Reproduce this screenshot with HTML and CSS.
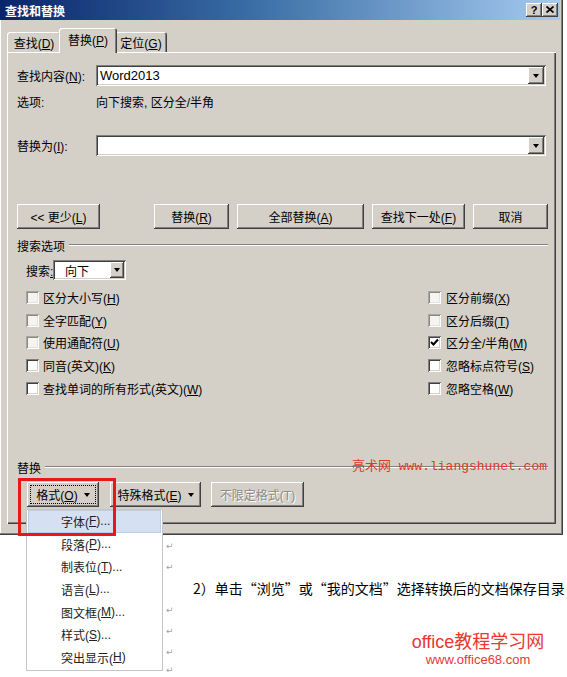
FILE: index.html
```html
<!DOCTYPE html>
<html lang="zh-CN">

<head>
    <meta charset="UTF-8">
    <meta name="viewport" content="width=device-width, initial-scale=1.0">
    <title>查找和替换</title>
    <link rel="stylesheet" href="styles.css">
</head>

<body>
    <div class="page">
        <div class="dialog">
            <div class="titlebar">
                <span class="title">查找和替换</span>
                <div class="cap-btns">
                    <span class="cap-btn">?</span>
                    <span class="cap-btn">
                        <svg width="8" height="7" viewBox="0 0 8 7"><path d="M0.5 0.5 L7.5 6.5 M7.5 0.5 L0.5 6.5" stroke="#000" stroke-width="1.7" fill="none"/></svg>
                    </span>
                </div>
            </div>

            <div class="tabs">
                <span class="tab tab-find"><span>查找(<u>D</u>)</span></span>
                <span class="tab active"><span>替换(<u>P</u>)</span></span>
                <span class="tab tab-goto"><span>定位(<u>G</u>)</span></span>
            </div>

            <div class="panel">
                <div class="field-row">
                    <span class="field-label">查找内容(<u>N</u>):</span>
                    <div class="combo">
                        <span class="combo-text">Word2013</span>
                        <span class="drop-btn"></span>
                    </div>
                </div>
                <div class="opts-row">
                    <span class="field-label">选项:</span>
                    <span>向下搜索, 区分全/半角</span>
                </div>
                <div class="field-row replace-row">
                    <span class="field-label">替换为(<u>I</u>):</span>
                    <div class="combo">
                        <span class="combo-text"></span>
                        <span class="drop-btn"></span>
                    </div>
                </div>

                <div class="btn-row">
                    <span class="btn btn-less"><span>&lt;&lt; 更少(<u>L</u>)</span></span>
                    <div class="btn-group">
                        <span class="btn btn-rep"><span>替换(<u>R</u>)</span></span>
                        <span class="btn btn-all"><span>全部替换(<u>A</u>)</span></span>
                        <span class="btn btn-next"><span>查找下一处(<u>F</u>)</span></span>
                        <span class="btn btn-cancel"><span>取消</span></span>
                    </div>
                </div>

                <div class="group-title"><span>搜索选项</span></div>

                <div class="search-row">
                    <span class="search-label">搜索<u>:</u></span>
                    <div class="select">
                        <span class="select-text">向下</span>
                        <span class="drop-btn small"></span>
                    </div>
                </div>

                <div class="checks">
                    <label class="check"><span class="box dim"></span><span>区分大小写(<u>H</u>)</span></label>
                    <label class="check right"><span class="box dim"></span><span>区分前缀(<u>X</u>)</span></label>
                    <label class="check"><span class="box dim"></span><span>全字匹配(<u>Y</u>)</span></label>
                    <label class="check right"><span class="box dim"></span><span>区分后缀(<u>T</u>)</span></label>
                    <label class="check"><span class="box dim"></span><span>使用通配符(<u>U</u>)</span></label>
                    <label class="check right"><span class="box">
                        <svg width="9" height="9" viewBox="0 0 9 9"><path d="M1 4 L3.5 6.5 L8 1.5" stroke="#000" stroke-width="2" fill="none"/></svg>
                    </span><span>区分全/半角(<u>M</u>)</span></label>
                    <label class="check"><span class="box"></span><span>同音(英文)(<u>K</u>)</span></label>
                    <label class="check right"><span class="box"></span><span>忽略标点符号(<u>S</u>)</span></label>
                    <label class="check"><span class="box"></span><span>查找单词的所有形式(英文)(<u>W</u>)</span></label>
                    <label class="check right"><span class="box"></span><span>忽略空格(<u>W</u>)</span></label>
                </div>

                <div class="bottom">
                    <div class="group-title"><span>替换</span></div>
                    <div class="fmt-row">
                        <span class="btn btn-fmt focus"><span>格式(<u>O</u>)</span><i class="tri"></i></span>
                        <span class="btn btn-special"><span>特殊格式(<u>E</u>)</span><i class="tri"></i></span>
                        <span class="btn btn-nofmt disabled"><span>不限定格式(T)</span></span>
                    </div>
                </div>
            </div>
        </div>

        <div class="doc">
            <div class="line"><span class="pm">↵</span></div>
            <div class="line"><span class="pm">↵</span></div>
            <div class="line"><span class="pm"></span><span class="doc-text">2）单击“浏览”或“我的文档”选择转换后的文档保存目录</span></div>
            <div class="line"><span class="pm">↵</span></div>
            <div class="line"><span class="pm">↵</span></div>
            <div class="line"><span class="pm">↵</span></div>
            <div class="line last"><span class="pm">↵</span></div>
        </div>

        <ul class="menu">
            <li class="hover">字体(<u>F</u>)...</li>
            <li>段落(<u>P</u>)...</li>
            <li>制表位(<u>T</u>)...</li>
            <li>语言(<u>L</u>)...</li>
            <li>图文框(<u>M</u>)...</li>
            <li>样式(<u>S</u>)...</li>
            <li>突出显示(<u>H</u>)</li>
        </ul>

        <div class="annot"></div>

        <div class="mark-site">亮术网 www.liangshunet.com</div>
        <div class="mark-office">
            <div class="mark-big">office教程学习网</div>
            <div class="mark-small">www.office68.com</div>
        </div>
    </div>
</body>

</html>
```

FILE: styles.css
```css
* {
    margin: 0;
    padding: 0;
    box-sizing: border-box;
}

body {
    font-family: "Liberation Sans", "Noto Sans CJK SC", sans-serif;
    font-size: 12px;
    color: #000;
    background: #fff;
}

.page {
    position: relative;
    width: 567px;
    height: 677px;
    overflow: hidden;
}

/* window */
.dialog {
    width: 563px;
    height: 535px;
    padding-right: 3px;
    background: #d4d0c8;
    box-shadow: inset -1px -1px #404040, inset -2px -2px #808080, inset 1px 0 #fff;
    display: flex;
    flex-direction: column;
}

.titlebar {
    height: 20px;
    flex: none;
    padding: 0 2px 0 5px;
    background: linear-gradient(to right, #0a246a, #3a6ea5 45%, #a6caf0);
    display: flex;
    align-items: center;
    justify-content: space-between;
}

.title {
    color: #fff;
    font-weight: bold;
    font-size: 12px;
}

.cap-btns {
    display: flex;
}

.cap-btn {
    width: 16px;
    height: 14px;
    background: #d4d0c8;
    box-shadow: inset -1px -1px #404040, inset 1px 1px #fff, inset -2px -2px #808080;
    display: flex;
    justify-content: center;
    align-items: center;
    font-weight: bold;
    font-size: 11px;
    padding-bottom: 1px;
}

/* tabs */
.tabs {
    height: 33px;
    flex: none;
    padding-left: 7px;
    margin-bottom: -1px;
    display: flex;
    align-items: flex-end;
    position: relative;
    z-index: 1;
}

.tab {
    width: 54px;
    height: 20px;
    margin-bottom: 1px;
    padding-top: 1px;
    background: #d4d0c8;
    border-radius: 3px 3px 0 0;
    box-shadow: inset 1px 1px #fff, inset -1px 0 #404040, inset -2px 0 #808080;
    display: flex;
    justify-content: center;
    align-items: center;
}

.tab.tab-goto {
    width: 52px;
}

.tab.active {
    width: 58px;
    height: 25px;
    margin: 0 -2px;
    padding-top: 0;
    padding-bottom: 3px;
    position: relative;
    z-index: 1;
}

/* tab page */
.panel {
    flex: 1;
    margin: 0 4px 11px 7px;
    padding: 13px 8px 17px 10px;
    box-shadow: inset 1px 1px #fff, inset -1px -1px #404040, inset -2px -2px #808080;
    display: flex;
    flex-direction: column;
}

.field-row {
    height: 21px;
    display: flex;
    align-items: center;
}

.field-label {
    width: 79px;
    flex: none;
}

.replace-row {
    margin-top: 25px;
}

.combo {
    flex: 1;
    height: 21px;
    margin-right: 2px;
    padding: 2px;
    background: #fff;
    box-shadow: inset 1px 1px #808080, inset -1px -1px #fff, inset 2px 2px #404040, inset -2px -2px #d4d0c8;
    display: flex;
    align-items: center;
}

.combo-text {
    flex: 1;
    padding-left: 2px;
    font-size: 13px;
}

.drop-btn {
    width: 16px;
    height: 17px;
    flex: none;
    background: #d4d0c8;
    box-shadow: inset -1px -1px #404040, inset 1px 1px #fff, inset -2px -2px #808080;
    display: flex;
    justify-content: center;
    align-items: center;
}

.drop-btn::after,
.tri {
    content: "";
    width: 0;
    height: 0;
    border-left: 3.5px solid transparent;
    border-right: 3.5px solid transparent;
    border-top: 4px solid #000;
}

.drop-btn.small {
    width: 14px;
    height: 16px;
}

.opts-row {
    height: 18px;
    margin-top: 6px;
    display: flex;
    align-items: center;
}

/* buttons */
.btn-row {
    height: 25px;
    margin-top: 48px;
    display: flex;
}

.btn-group {
    margin-left: auto;
    display: flex;
    gap: 8px;
}

.btn {
    height: 25px;
    background: #d4d0c8;
    box-shadow: inset -1px -1px #404040, inset 1px 1px #fff, inset -2px -2px #808080;
    display: flex;
    justify-content: center;
    align-items: center;
    gap: 6px;
    white-space: nowrap;
}

.btn-less { width: 83px; }
.btn-rep { width: 75px; }
.btn-all { width: 127px; }
.btn-next { width: 93px; }
.btn-cancel { width: 75px; }

.btn.focus {
    outline: 1px dotted #000;
    outline-offset: -4px;
}

.btn.disabled {
    color: #8c8a85;
    text-shadow: 1px 1px #fff;
}

.group-title {
    height: 16px;
    margin-top: 8px;
    display: flex;
    align-items: center;
}

.group-title::after {
    content: "";
    flex: 1;
    margin-left: 4px;
    border-top: 1px solid #808080;
    border-bottom: 1px solid #fff;
}

.search-row {
    height: 20px;
    margin-top: 7px;
    padding-left: 9px;
    display: flex;
    align-items: center;
}

.search-label {
    width: 27px;
    flex: none;
    white-space: nowrap;
}

.select {
    width: 73px;
    height: 20px;
    padding: 2px;
    background: #fff;
    box-shadow: inset 1px 1px #808080, inset -1px -1px #fff, inset 2px 2px #404040, inset -2px -2px #d4d0c8;
    display: flex;
    align-items: center;
}

.select-text {
    flex: 1;
    padding-left: 10px;
}

/* check boxes */
.checks {
    margin-top: 6px;
    display: grid;
    grid-template-columns: 411px 1fr;
    grid-auto-rows: 22.7px;
}

.check {
    padding-left: 9px;
    display: flex;
    align-items: center;
    gap: 4px;
    white-space: nowrap;
}

.check.right {
    padding-left: 0;
    gap: 5px;
}

.box {
    width: 13px;
    height: 13px;
    flex: none;
    background: #fff;
    box-shadow: inset 1px 1px #808080, inset -1px -1px #fff, inset 2px 2px #404040, inset -2px -2px #d4d0c8;
    display: flex;
    justify-content: center;
    align-items: center;
}

.box.dim {
    background: #f5f4f1;
    box-shadow: inset 1px 1px #a8a6a0, inset -1px -1px #fff, inset 2px 2px #8a8883, inset -2px -2px #e4e2dc;
}

.bottom {
    margin-top: auto;
}

.bottom .group-title {
    margin-top: 0;
}

.fmt-row {
    margin-top: 7px;
    padding-left: 10px;
    display: flex;
}

.btn-fmt { width: 72px; }
.btn-special { width: 91px; margin-left: 11px; }
.btn-nofmt { width: 93px; margin-left: 10px; }

/* document behind */
.doc {
    padding-left: 166px;
}

.line {
    height: 21.3px;
    display: flex;
    align-items: center;
}

.line.last {
    height: 14px;
}

.pm {
    width: 27px;
    flex: none;
    font-family: "DejaVu Sans", sans-serif;
    font-size: 9px;
    line-height: 10px;
    color: #a0a0a0;
}

.doc-text {
    font-family: "Noto Sans CJK SC", sans-serif;
    font-size: 14px;
    white-space: nowrap;
}

/* dropdown menu */
.menu {
    position: absolute;
    left: 26px;
    top: 509px;
    width: 137px;
    padding: 0 1px 1px;
    background: #fff;
    border: 1px solid #c6c6c6;
    list-style: none;
    z-index: 2;
}

.menu li {
    height: 22.7px;
    padding-left: 33px;
    display: flex;
    align-items: center;
    color: #222;
}

.menu li.hover {
    background: #d5e1f2;
    border: 1px solid #bccde8;
    padding-left: 32px;
}

/* annotations */
.annot {
    position: absolute;
    left: 18px;
    top: 478px;
    width: 98px;
    height: 58px;
    border: 3px solid #e61919;
    z-index: 3;
}

.mark-site {
    position: absolute;
    left: 352px;
    top: 459px;
    line-height: 16px;
    font-family: "Liberation Mono", "Noto Sans CJK SC", monospace;
    font-size: 13px;
    color: #e3352c;
    white-space: nowrap;
}

.mark-office {
    position: absolute;
    left: 405px;
    top: 631px;
    width: 146px;
    text-align: center;
    color: #e8382f;
}

.mark-big {
    font-family: "Liberation Sans", "Noto Sans CJK SC", sans-serif;
    font-size: 18px;
    line-height: 22px;
}

.mark-small {
    font-family: "Liberation Sans", sans-serif;
    font-size: 13px;
    line-height: 14px;
}
```
